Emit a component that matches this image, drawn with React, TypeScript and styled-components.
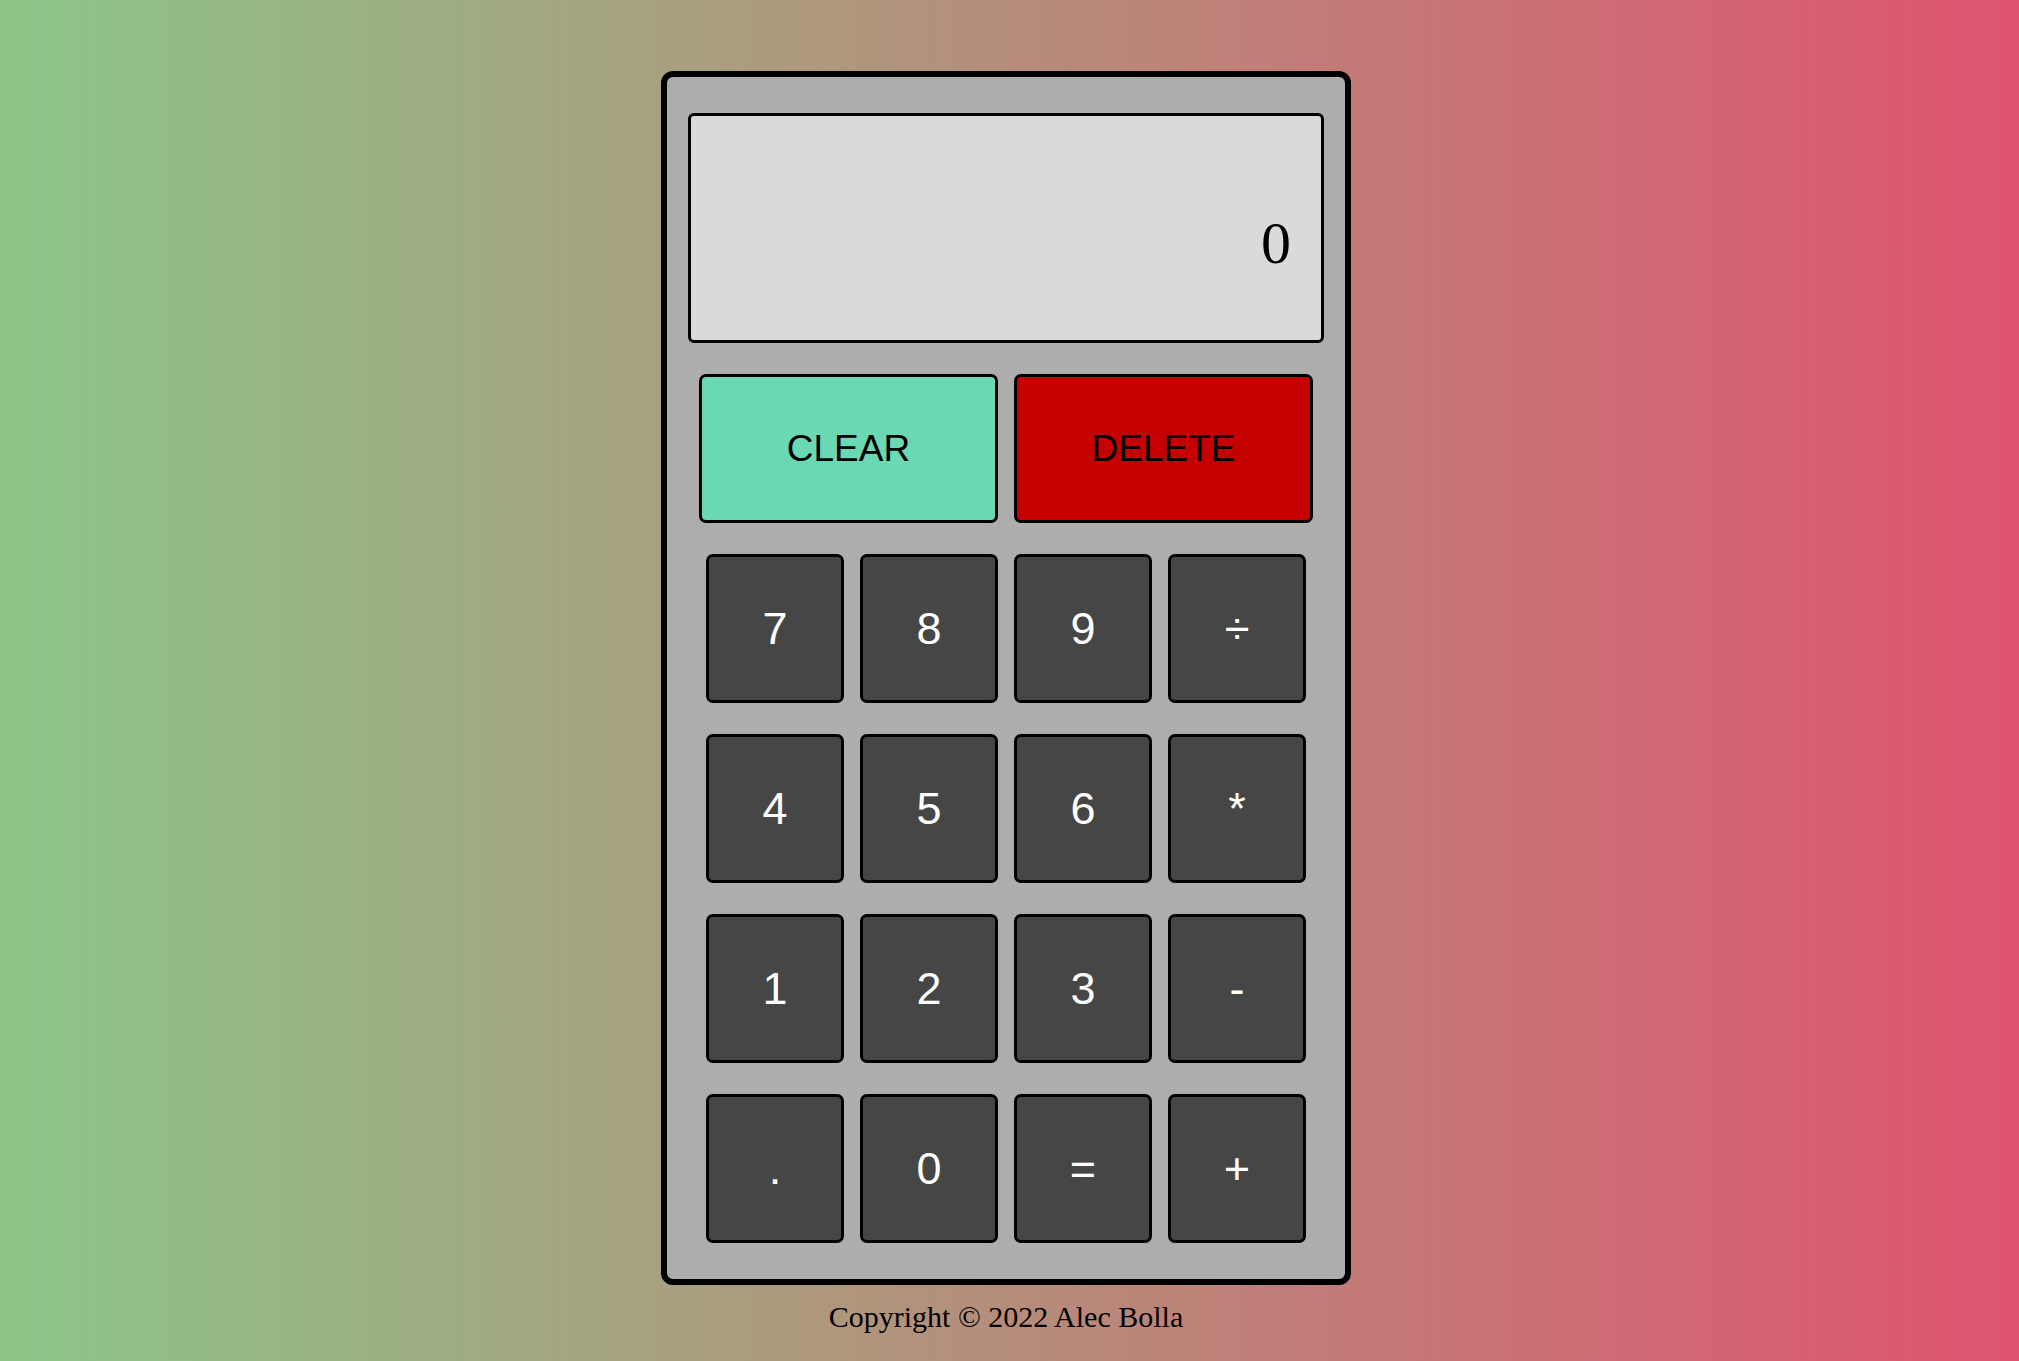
import * as React from "react";
import styled, { createGlobalStyle } from "styled-components";

const GlobalStyle = createGlobalStyle`
  html,
  body {
    margin: 0;
    padding: 0;
    min-height: 100vh;
  }

  body {
    background: linear-gradient(to right, #8cc687, #df546f);
    font-family: "Liberation Sans", Arial, sans-serif;
  }

  * {
    box-sizing: border-box;
  }
`;

const Page = styled.div`
  display: flex;
  flex-direction: column;
  align-items: center;
  padding: 71px 7px 0 0;
`;

const Calculator = styled.div`
  width: 690px;
  display: flex;
  flex-direction: column;
  gap: 31px;
  padding: 36px 21px;
  background: #adadad;
  border: 6px solid #000;
  border-radius: 12px;
`;

const Display = styled.div`
  height: 230px;
  display: flex;
  flex-direction: column;
  justify-content: center;
  align-items: flex-end;
  padding: 30px 30px 0;
  background: #dadada;
  border: 3px solid #000;
  border-radius: 6px;
`;

const CurrentOperand = styled.div`
  font-family: "Liberation Serif", "Times New Roman", serif;
  font-size: 60px;
  line-height: 60px;
  color: #000;
`;

const ActionRow = styled.div`
  display: grid;
  grid-template-columns: repeat(2, 299px);
  justify-content: center;
  gap: 16px;
`;

const Keypad = styled.div`
  display: grid;
  grid-template-columns: repeat(4, 138px);
  grid-auto-rows: 149px;
  justify-content: center;
  column-gap: 16px;
  row-gap: 31px;
`;

interface IKeyProps {
  variant?: "clear" | "delete";
}

const Key = styled.button<IKeyProps>`
  height: 149px;
  display: flex;
  align-items: center;
  justify-content: center;
  padding: 0;
  border: 3px solid #000;
  border-radius: 7px;
  font-family: "Liberation Sans", Arial, sans-serif;
  font-size: ${props => (props.variant ? "37px" : "45px")};
  color: ${props => (props.variant ? "#000" : "#fff")};
  background: ${props =>
    props.variant === "clear"
      ? "#6ad9b3"
      : props.variant === "delete"
      ? "#c40000"
      : "#464646"};
  cursor: pointer;
`;

const Footer = styled.p`
  margin: 15px 0 0;
  font-family: "Liberation Serif", "Times New Roman", serif;
  font-size: 30px;
  color: #000;
`;

const keys = ["7", "8", "9", "÷", "4", "5", "6", "*", "1", "2", "3", "-", ".", "0", "=", "+"];

const App: React.FC = () => (
  <>
    <GlobalStyle />
    <Page>
      <Calculator>
        <Display>
          <CurrentOperand>0</CurrentOperand>
        </Display>
        <ActionRow>
          <Key variant="clear">CLEAR</Key>
          <Key variant="delete">DELETE</Key>
        </ActionRow>
        <Keypad>
          {keys.map(k => (
            <Key key={k}>{k}</Key>
          ))}
        </Keypad>
      </Calculator>
      <Footer>Copyright © 2022 Alec Bolla</Footer>
    </Page>
  </>
);

export default App;
